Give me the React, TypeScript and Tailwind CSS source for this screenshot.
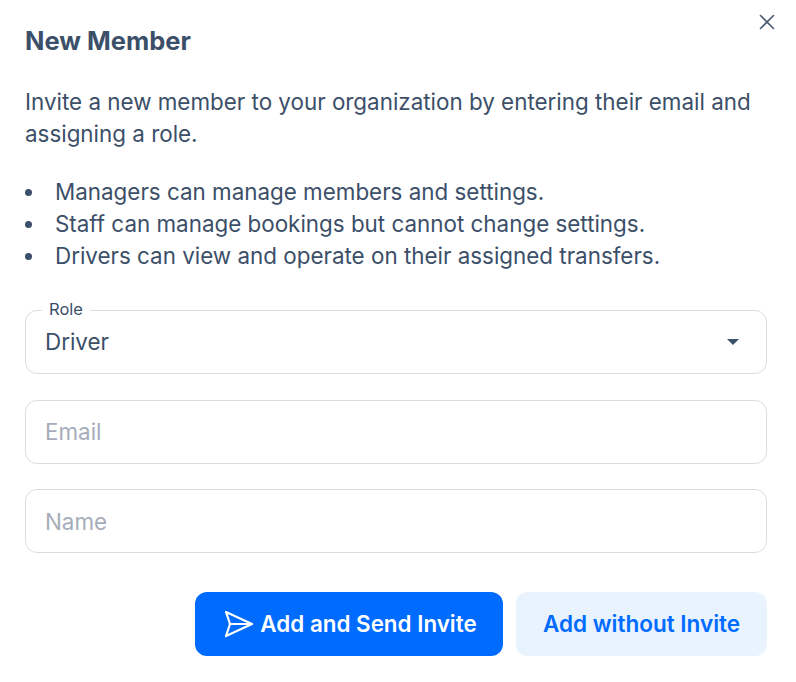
import { X } from 'lucide-react';

const points = [
  'Managers can manage members and settings.',
  'Staff can manage bookings but cannot change settings.',
  'Drivers can view and operate on their assigned transfers.',
];

export default function App() {
  return (
    <div className="relative min-h-[682px] w-[796px] bg-white pl-[25px] pr-[29px] pt-[25px] font-['Inter',sans-serif] text-[#3c4f69]">
      <button className="absolute right-[16px] top-[9px] text-[#4a5a70]">
        <X size={26} strokeWidth={1.5} />
      </button>
      <h2 className="text-[25.5px] font-bold leading-[32px]">New Member</h2>

      <p className="mt-[29px] text-[22.4px] leading-[32px]">
        Invite a new member to your organization by entering their email and assigning a role.
      </p>

      <ul className="mt-[26px] text-[22.4px] leading-[32px]">
        {points.map((point) => (
          <li key={point} className="flex items-center">
            <span className="mr-[23px] h-[7px] w-[7px] rounded-full bg-[#3c4f69]" />
            {point}
          </li>
        ))}
      </ul>

      <div className="relative mt-[38px] flex h-[64px] items-center justify-between rounded-[12px] border border-[#d9dde3] pl-[19px] pr-[27px]">
        <span className="absolute -top-[12px] left-[16px] bg-white px-[7px] text-[16.5px] leading-[20px] text-[#3c4f69]">Role</span>
        <span className="text-[22.4px]">Driver</span>
        <span className="h-0 w-0 border-x-[6px] border-t-[6px] border-x-transparent border-t-[#3c4f69]" />
      </div>

      <div className="mt-[26px] flex h-[64px] items-center rounded-[12px] border border-[#d9dde3] pl-[19px] text-[22.4px] text-[#a6adba]">Email</div>
      <div className="mt-[25px] flex h-[64px] items-center rounded-[12px] border border-[#d9dde3] pl-[19px] pt-[2px] text-[22.4px] text-[#a6adba]">Name</div>

      <div className="mt-[39px] flex justify-end gap-[13px]">
        <button className="flex h-[64px] w-[308px] items-center justify-center gap-[6px] rounded-[12px] bg-[#006bff] pl-[3px] text-[22.4px] font-semibold text-white">
          <svg width="30" height="28" viewBox="0 0 30 28" fill="none" stroke="currentColor" strokeWidth="2.2" strokeLinejoin="round" strokeLinecap="round">
            <path d="M2 2 L28 14 L2 26 L6 14 Z" />
            <path d="M6 14 H28" />
          </svg>
          Add and Send Invite
        </button>
        <button className="flex h-[64px] w-[251px] items-center justify-center rounded-[12px] bg-[#e9f3fe] text-[22.5px] font-semibold text-[#006bff]">
          Add without Invite
        </button>
      </div>
    </div>
  );
}
